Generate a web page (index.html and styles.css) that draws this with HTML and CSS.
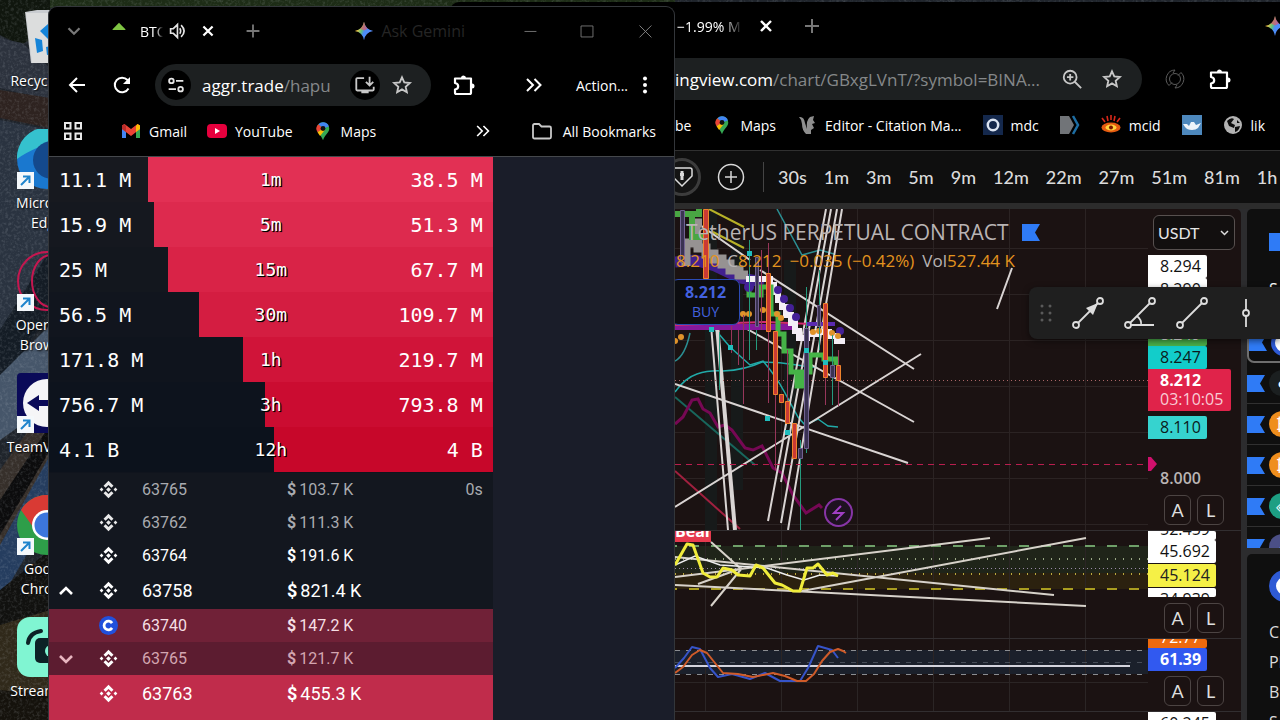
FILE: index.html
```html
<!DOCTYPE html>
<html lang="en">
<head>
    <meta charset="UTF-8">
    <meta name="viewport" content="width=device-width, initial-scale=1.0">
    <title>Desktop</title>
    <link rel="stylesheet" href="styles.css">
</head>
<body>
    <!-- Shared icons -->
    <svg class="sprite" aria-hidden="true">
        <symbol id="i-plus" viewBox="0 0 24 24"><path d="M12 5v14M5 12h14" stroke="currentColor" stroke-width="2" fill="none"/></symbol>
        <symbol id="i-x" viewBox="0 0 24 24"><path d="M7 7l10 10M17 7L7 17" stroke="currentColor" stroke-width="2.400" fill="none"/></symbol>
        <symbol id="i-star" viewBox="0 0 24 24"><path d="M12 3.600l2.500 5.600 6.100.600-4.600 4.100 1.300 6-5.300-3.100-5.300 3.100 1.300-6-4.600-4.100 6.100-.600z" stroke="currentColor" stroke-width="2" fill="none"/></symbol>
        <symbol id="i-ext" viewBox="0 0 24 24"><path d="M4 5.500H20V19.500q0 1.500-1.500 1.500H5.500Q4 21 4 19.500V16.500q3.200-.5 3.200-3.200T4 10z" transform="translate(-1 0)" stroke="currentColor" stroke-width="2.200" fill="none" stroke-linejoin="round"/><path d="M9 5a2.500 2.500 0 0 1 5 0zM20 10.500a2.500 2.500 0 0 1 0 5z" fill="currentColor"/></symbol>
        <symbol id="i-more" viewBox="0 0 24 24"><path d="M5 6l6 6-6 6M12.500 6l6 6-6 6" stroke="currentColor" stroke-width="2" fill="none"/></symbol>
        <symbol id="i-gem" viewBox="0 0 24 24"><path d="M12 2q1.500 8.500 10 10-8.500 1.500-10 10-1.500-8.500-10-10 8.500-1.500 10-10z" fill="url(#gem)"/><path d="M12 2q.9 5 4 7.500l-4 2-4-2Q11.100 7 12 2z" fill="#e0556b" opacity="0.700"/></symbol>
        <symbol id="i-maps" viewBox="0 0 24 24"><path d="M12 1.500a7.500 7.500 0 0 1 7.500 7.500c0 5-5 7-7.500 14-2.500-7-7.500-9-7.500-14A7.500 7.500 0 0 1 12 1.500z" fill="#35a853"/><path d="M12 1.500a7.500 7.500 0 0 1 7 5L12 9 6.500 4A7.500 7.500 0 0 1 12 1.500z" fill="#4285f4"/><path d="M6.300 4L12 9l-6.500 4.500A7.500 7.500 0 0 1 6.300 4z" fill="#ea4335"/><path d="M12 9l-6.500 4.500q1.200 2 3 4.500L14 11z" fill="#fbbc04"/><circle cx="12" cy="9" r="2.900" fill="#111"/></symbol>
        <symbol id="i-binance" viewBox="0 0 24 24"><path d="M12 1l6.300 6.300-2.600 2.600L12 6.200 8.300 9.900 5.700 7.300zM12 23l6.300-6.300-2.600-2.600L12 17.800l-3.700-3.700-2.600 2.600zM12 9l3 3-3 3-3-3zM3.200 9.600L5.600 12l-2.400 2.400L.8 12zM20.800 9.600l2.400 2.400-2.400 2.400-2.400-2.400z" fill="currentColor"/></symbol>
        <symbol id="i-flag" viewBox="0 0 18 17"><path d="M0 0h18l-5 8.500 5 8.500H0z" fill="#2f7bf6"/></symbol>
        <symbol id="i-short" viewBox="0 0 17 17"><path d="M0 0h17v17H0z" fill="#f4f8fb"/><path d="M4 13l8-8M6 4.500h6.500V11" stroke="#1e84cc" stroke-width="2" fill="none"/></symbol>
        <linearGradient id="gem" x1="0" y1="0.300" x2="1" y2="0.700">
            <stop offset="0.150" stop-color="#f6c644"/><stop offset="0.380" stop-color="#5fc27b"/><stop offset="0.520" stop-color="#4a8df8"/><stop offset="1" stop-color="#5c8dff"/>
        </linearGradient>
    </svg>

    <!-- Wallpaper -->
    <svg class="wallpaper" viewBox="0 0 1280 720" preserveAspectRatio="xMinYMin slice" aria-hidden="true">
        <filter id="grain"><feTurbulence type="fractalNoise" baseFrequency="0.350" numOctaves="3" seed="4"/><feColorMatrix values="0 0 0 0 .6  0 0 0 0 .65  0 0 0 0 .7  1.600 0 0 0 -.72"/></filter>
        <rect width="1280" height="720" fill="#1f242b"/>
        <path d="M0 0h675v8H0z" fill="#1d2c16"/>
        <path d="M0 0h50v30L20 45 0 35z" fill="#10160e"/>
        <path d="M0 38l22 5 28 25v32L0 88z" fill="#2c323d"/>
        <path d="M0 90l50 8v30L0 118z" fill="#2e2320"/>
        <path d="M0 120l50 10v130L0 330z" fill="#2a3340"/>
        <path d="M0 330l50-80v60L0 390z" fill="#141c25"/>
        <path d="M0 375l50-50v80L0 440z" fill="#46566a"/>
        <path d="M50 400v60L0 575V470z" fill="#362f2a"/>
        <path d="M50 425v25L0 535v-35z" fill="#0c0c0d"/>
        <path d="M0 545l50-90v60L0 600z" fill="#253d5f"/>
        <path d="M0 590l50-40v65L0 625z" fill="#11110f"/>
        <path d="M0 625l50-15v110H0z" fill="#30291a"/>
        <path d="M0 690l50 5v25H0z" fill="#15120c"/>
        <rect width="1280" height="720" filter="url(#grain)" opacity="0.250"/>
    </svg>

    <nav class="desktop-icons">
        <a href="#"><svg viewBox="0 0 60 60"><path d="M8 5l12-2h34l-4 53H14z" fill="#c9ccd0"/><path d="M9 6h46l-4 50H15z" fill="#dcdddd"/><path d="M23 24l8-7 6 6-6 9zM18 31l7 2 1 11-6 2zM29 40l10-2 3 8-12 2z" fill="#1684d8"/></svg><span>Recycle Bin</span></a>
        <a href="#"><svg viewBox="0 0 60 60"><circle cx="30" cy="30" r="30" fill="#1a78cf"/><path d="M0 30A30 30 0 0 1 60 27Q40 8 22 18 8 24 0 30z" fill="#35c1ce"/><circle cx="35" cy="31" r="19" fill="#14498c"/><use href="#i-short" y="43" width="17" height="17"/></svg><span>Microsoft Edge</span></a>
        <a href="#"><svg viewBox="0 0 60 60"><g fill="none" stroke="#c51750" stroke-width="2"><ellipse cx="30" cy="30" rx="29" ry="29"/><ellipse cx="34" cy="30" rx="19" ry="26"/></g><use href="#i-short" y="43" width="17" height="17"/></svg><span>Opera GX Browser</span></a>
        <a href="#"><svg viewBox="0 0 60 60"><rect width="60" height="60" rx="4" fill="#0a0a58"/><circle cx="30" cy="30" r="24" fill="#f5f5f7"/><path d="M10 30l12-8v5h16v-5l12 8-12 8v-5H22v5z" fill="#0a0a58"/><use href="#i-short" y="43" width="17" height="17"/></svg><span>TeamViewer</span></a>
        <a href="#"><svg viewBox="0 0 60 60"><circle cx="30" cy="30" r="30" fill="#2e9e49"/><path d="M4 15A30 30 0 0 1 56 15H30L16 32z" fill="#d93a34"/><circle cx="30" cy="30" r="15" fill="#fff"/><circle cx="30" cy="30" r="12.500" fill="#3c76dc"/><use href="#i-short" y="43" width="17" height="17"/></svg><span>Google Chrome</span></a>
        <a href="#"><svg viewBox="0 0 60 60"><rect width="60" height="60" rx="13" fill="#80f5d2"/><path d="M11 26q1-10 13-12" stroke="#0c2226" stroke-width="4" fill="none" stroke-linecap="round"/><rect x="18" y="21" width="32" height="25" rx="5" fill="#0c2226"/><circle cx="34" cy="34" r="6" fill="#80f5d2"/></svg><span>Streamlabs</span></a>
    </nav>

    <!-- TradingView window -->
    <section class="window window-tv">
        <div class="tv-tabs">
            <span class="tab-title fade-end">−1.99% M</span>
            <button aria-label="Close tab"><svg><use href="#i-x"/></svg></button>
            <button class="dim" aria-label="New tab"><svg><use href="#i-plus"/></svg></button>
            <svg class="tv-gem"><use href="#i-gem"/></svg>
        </div>
        <div class="tv-bar">
            <div class="tv-omni">
                <span class="url">ingview.com<i>/chart/GBxgLVnT/?symbol=BINA...</i></span>
                <button aria-label="Zoom"><svg viewBox="0 0 24 24"><g stroke="#c7c7c7" stroke-width="2" fill="none"><circle cx="10" cy="10" r="7"/><path d="M15 15l7 7M6.500 10h7M10 6.500v7"/></g></svg></button>
                <button class="soft" aria-label="Bookmark"><svg><use href="#i-star"/></svg></button>
            </div>
            <button aria-label="Sync"><svg viewBox="0 0 24 24"><g fill="none" stroke="#5b5b5b"><circle cx="12" cy="12" r="5.500"/><path d="M12 3a9 9 0 0 0-6 15.500l3-3M12 21a9 9 0 0 0 6-15.500l-3 3M12 3l-2 3M12 21l2-3"/></g></svg></button>
            <button aria-label="Extensions"><svg><use href="#i-ext"/></svg></button>
        </div>
        <div class="tv-marks">
            <a href="#">be</a>
            <a href="#"><svg><use href="#i-maps"/></svg>Maps</a>
            <a href="#"><svg viewBox="0 0 20 20"><path d="M2 2q5-1 6 6l2 6q-1-9 3-12l4-1-1 4 2 3-3 1 2 4-3 2v4h-5Q5 15 5 9 5 5 2 2z" fill="#8e8e8e"/></svg>Editor - Citation Ma...</a>
            <a href="#"><svg viewBox="0 0 20 20"><path d="M0 0h20v20H0z" fill="#14284c"/><circle cx="10" cy="10" r="5.200" fill="none" stroke="#dbe4f2" stroke-width="2.500"/></svg>mdc</a>
            <a href="#" aria-label="Bookmark"><svg viewBox="0 0 20 20"><path d="M0 1h9l5 9-5 9H0z" fill="#717478"/><path d="M13 1l5 9-5 9" fill="none" stroke="#1d6da3" stroke-width="2.500"/></svg></a>
            <a href="#"><svg viewBox="0 0 20 20"><ellipse cx="10" cy="12.500" rx="9.500" ry="5" fill="#e45b10"/><ellipse cx="10" cy="12.500" rx="5.500" ry="3" fill="#ffd23c"/><circle cx="10" cy="12.500" r="2" fill="#7a1600"/><path d="M1 3l3 4M6 1l1 5M10 0v5M14 1l-1 5M19 3l-3 4" stroke="#d8281a" stroke-width="1.600"/></svg>mcid</a>
            <a href="#" aria-label="Bookmark"><svg viewBox="0 0 20 20"><path d="M0 0h20v20H0z" fill="#4d88bd"/><path d="M1 9h4l2 2 2-4h3l2 3 5-2-3 5q-2 2-6 2-5 0-7-3z" fill="#eef4fa"/></svg></a>
            <a href="#"><svg viewBox="0 0 20 20"><circle cx="10" cy="10" r="9" fill="#b3b3b3"/><path d="M4 6q4-4 7-2l-3 4 4 2-1 3-5-2zM12 12l5-1q-1 5-5 6zM14 5l3 3-3 0z" fill="#0b0b0b"/></svg>lik</a>
        </div>

        <div class="tv-times">
            <svg class="tv-shield" viewBox="0 0 38 38"><circle cx="19" cy="19" r="17.500" fill="#141414" stroke="#3c3c3c" stroke-width="3"/><path d="M9 12q0-2 2-2h16q2 0 2 2v6L19 28 9 18z" fill="none" stroke="#dcdcdc" stroke-width="1.500"/><path d="M19 13v9M17 16.500h4" stroke="#dcdcdc" stroke-width="3"/></svg>
            <button aria-label="Compare"><svg viewBox="0 0 28 28"><g fill="none" stroke="#d8d8d8" stroke-width="1.500"><circle cx="14" cy="14" r="12.500"/><path d="M14 8v12M8 14h12"/></g></svg></button>
            <hr>
            <div class="tv-frames">
                <button>30s</button><button>1m</button><button>3m</button><button>5m</button><button>9m</button><button>12m</button><button>22m</button><button>27m</button><button>51m</button><button>81m</button><button>1h</button>
            </div>
        </div>

        <div class="tv-main">
            <div class="tv-charts">
                <!-- Price pane -->
                <div class="pane pane-price">
                    <div class="plot">
                        <svg viewBox="675 209 473 321" preserveAspectRatio="xMinYMin slice">
                            <path d="M705.500 209v321M781.500 209v321M857.500 209v321M933.500 209v321M1009.500 209v321M1085.500 209v321M675 248.500h473M675 294.500h473M675 340.500h473M675 386.500h473M675 432.500h473M675 478.500h473M675 524.500h473" stroke="#2b2323" fill="none"/>
                            <path d="M711 209v321M737 240v250M790 260v180" stroke="#171a1a" stroke-width="12"/>
                            <!-- averages -->
                            <g fill="none" stroke-width="1.500">
                                <path d="M675 392Q685 378 697 374T723 371Q745 370 762 362 780 362 797 365T817 367" stroke="#21aaa8"/>
                                <path d="M713 327l17 20 20 18 13-4q13 15 22 32l13 24 7 8 13-6 10 7 10 1" stroke="#21aaa8"/>
                                <path d="M675 361q10-5 15-28M777 209l25 46 18-5 14 4" stroke="#2b8e92"/>
                                <path d="M675 397l80 68" stroke="#18665c" stroke-width="2"/>
                                <path d="M675 471l65 58" stroke="#a1203f" stroke-width="2"/>
                                <path d="M709 209l35 18M713 232l31 16" stroke="#b7b127" stroke-width="2"/>
                            </g>
                            <path d="M675 424l8-7 9-17 6-1 5 10 7 4 8 14 7-2 7 5 13 18 8 2 9-4 11 22 9 5 11 22 13 18 13-8 3 3" fill="none" stroke="#760854" stroke-width="3"/>
                            <!-- drawn lines -->
                            <g stroke="#d9d4d3" stroke-width="2" fill="none">
                                <path d="M826 209l-58 312M831 209l-50 273M837 209l-56 314M842 209l-54 321M711 325l17 205M760 270l154 99M738 324l176 98M675 384l233 79M675 507l246-153M997 309l15-41M700 225l50 35"/>
                                <path d="M717 325l18 205" stroke-width="4"/>
                            </g>
                            <path d="M675 380.500h473" stroke="#a66" stroke-dasharray="1 3"/>
                            <path d="M675 464.500h473" stroke="#b81e4e" stroke-dasharray="6 5"/>
                            <!-- bands -->
                            <path d="M675 327h118" stroke="#85189c" stroke-width="6"/>
                            <path d="M675 325l90-3 70 3" stroke="#d32a70" stroke-width="2" fill="none"/>
                            <path d="M675 262l20-2 20 6 25 12 24 4" stroke="#42208f" stroke-width="11" fill="none"/>
                            <path d="M686 266V243h10V223h6" stroke="#969292" stroke-width="9" fill="none"/>
                            <path d="M698 240v8h8v6h8v5h8v5h8v6h9v5h9" stroke="#969292" stroke-width="9" fill="none"/>
                            <path d="M746 279h24v6h4v7h4v8h4v7h4v8h5v8h4v8h4v7h8v-4h10v-2h12v4h8v5h8" stroke="#f4eef6" stroke-width="6" fill="none"/>
                            <path d="M675 214h24v-5M692 215v22h12" stroke="#49a643" stroke-width="6" fill="none"/>
                            <path d="M749 287v8h12v-8h10v27h7v20h6v17h7v21h6v14h5v-14h8v-17h14v4h12v6" stroke="#45b347" stroke-width="5" fill="none"/>
                            <g fill="#442097"><circle cx="749" cy="287" r="5"/><circle cx="778" cy="290" r="4"/><circle cx="784" cy="299" r="4"/><circle cx="790" cy="308" r="4"/><circle cx="796" cy="317" r="4"/><circle cx="840" cy="331" r="4"/></g>
                            <path d="M806 324h29" stroke="#5b2ab0" stroke-width="4"/>
                            <g fill="#e0932a"><circle cx="675" cy="341" r="3"/><circle cx="681" cy="337" r="3"/><circle cx="743" cy="314" r="3"/><circle cx="749" cy="314" r="3"/><circle cx="763" cy="310" r="3"/><circle cx="777" cy="314" r="3"/><circle cx="781" cy="318" r="3"/><circle cx="813" cy="332" r="3"/><circle cx="819" cy="331" r="3"/><circle cx="832" cy="333" r="3"/><circle cx="838" cy="336" r="3"/></g>
                            <!-- wicks -->
                            <path d="M743.500 315v89M738.500 330v35M731.500 326v27M775.500 395v75M787.500 350v70M768.500 243v160M825.500 377v28M838.500 350v56M761.500 250v80" stroke="#98365a"/>
                            <path d="M719.500 332v58M749.500 240v120M756.500 330v20M806.500 287v166M800.500 440v90M819.500 270v80M832.500 335v70" stroke="#259b7e"/>
                            <!-- candles -->
                            <g fill="#c93a35" stroke="#ef832c">
                                <path d="M703.500 209.500h5v69h-5zM766.500 273.500h4v58h-4zM773.500 331.500h4v63h-4zM779.500 394.500h4v8h-4zM785.500 401.500h4v22h-4zM792.500 423.500h4v35h-4zM823.500 303.500h4v74h-4zM836.500 365.500h4v15h-4z"/>
                            </g>
                            <g fill="#3a3252" stroke="#716291">
                                <path d="M680.500 210.500h4v52h-4zM755.500 257.500h3v69h-3zM798.500 448.500h4v10h-4zM804.500 328.500h4v120h-4zM817.500 305.500h3v21h-3zM830.500 365.500h4v12h-4z"/>
                            </g>
                            <path d="M728 345h5v5h-5zM747 251h5v5h-5zM804 348h5v5h-5zM823 360h5v5h-5zM765 416h5v5h-5zM785 430h5v5h-5zM709 327h5v5h-5z" fill="#21bdbd"/>
                            <circle cx="838.500" cy="512.500" r="13.500" fill="#1e1220" stroke="#8735a6" stroke-width="2"/>
                            <path d="M841 506l-7 7h9l-7 7" stroke="#a03fc4" stroke-width="2" fill="none"/>
                        </svg>
                        <div class="legend">
                            <h1>TetherUS PERPETUAL CONTRACT <svg><use href="#i-flag"/></svg></h1>
                            <p><b>8.210</b><span>C<b>8.212</b></span><b>−0.035 (−0.42%)</b><span>Vol<b>527.44 K</b></span></p>
                        </div>
                        <button class="buy"><b>8.212</b>BUY</button>
                    </div>
                    <div class="axis">
                        <select aria-label="Currency"><option>USDT</option></select>
                        <div class="tags">
                            <span class="tag white">8.294</span>
                            <span class="tag white">8.290</span>
                            <span class="tag green">8.249</span>
                            <span class="tag cyan">8.247</span>
                            <span class="tag red"><b>8.212</b>03:10:05</span>
                            <span class="tag cyan apart">8.110</span>
                        </div>
                        <svg class="marker" viewBox="0 0 10 14"><path d="M0 0h3l6 7-6 7H0z" fill="#d0106c"/></svg>
                        <span class="tick">8.000</span>
                        <div class="scale"><button>A</button><button>L</button></div>
                    </div>
                </div>

                <!-- Oscillator panes -->
                <div class="pane pane-rsi">
                    <div class="plot">
                        <svg viewBox="675 531 473 107" preserveAspectRatio="xMinYMin slice">
                            <path d="M675 546h473v27H675z" fill="#1f2419"/>
                            <path d="M675 573h473v16H675z" fill="#2b210f"/>
                            <path d="M705.500 530v109M781.500 530v109M857.500 530v109M933.500 530v109M1009.500 530v109M1085.500 530v109" stroke="#2b2525"/>
                            <path d="M675 546h473" stroke="#6fa069" stroke-width="2" stroke-dasharray="10 12" stroke-dashoffset="8"/>
                            <path d="M675 559h473" stroke="#9aa886" stroke-width="2" stroke-dasharray="1 7"/>
                            <path d="M675 568.500h473" stroke="#9a8aa8" stroke-dasharray="1 3"/>
                            <path d="M675 574h473" stroke="#b9a93e" stroke-width="2" stroke-dasharray="1 7"/>
                            <path d="M675 589h473" stroke="#a99d20" stroke-width="2" stroke-dasharray="10 12" stroke-dashoffset="8"/>
                            <path d="M675 577l65-8 250-31M802 591l284-53M675 557l379 38M675 585l411 21M711 542l30 27M711 606l31-38M698 584l44-16" stroke="#d7d2ca" stroke-width="2" fill="none"/>
                            <path d="M675 565l20-9 25 9 47 3 20 7 17 5 16-5 18 1" stroke="#eee" stroke-width="1.500" fill="none"/>
                            <path d="M675 565l12-21 6 1 10 28 7 4h7l6-9 9 2 6 5 12 1 6-11 7 3 12 15 7 2 11 6h7l7-23h6l5-4 9 11 6-2 5 3" stroke="#f0ec3b" stroke-width="3" fill="none" stroke-linejoin="round"/>
                        </svg>
                        <span class="bear">Bear</span>
                    </div>
                    <div class="axis">
                        <div class="tags wide">
                            <span class="tag white cut-top">52.459</span>
                            <span class="tag white">45.692</span>
                            <span class="tag yellow">45.124</span>
                            <span class="tag white cut-bottom">34.939</span>
                        </div>
                        <div class="scale"><button>A</button><button>L</button></div>
                    </div>
                </div>
                <div class="pane pane-stoch">
                    <div class="plot">
                        <svg viewBox="675 639 473 72" preserveAspectRatio="xMinYMin slice">
                            <path d="M675 650h473v24H675z" fill="#1b202b"/>
                            <path d="M705.500 638v74M781.500 638v74M857.500 638v74M933.500 638v74M1009.500 638v74M1085.500 638v74M675 682.500h473" stroke="#2b2525"/>
                            <path d="M675 650.500h473M675 674.500h473" stroke="#8b8d91" stroke-dasharray="5 6"/>
                            <path d="M675 662.500h473" stroke="#474d58" stroke-dasharray="5 6"/>
                            <path d="M675 666h455" stroke="#d3d3dc" stroke-width="2"/>
                            <path d="M675 668l9-10 8-11 8 2 10 19 8 9 14-3 18 5 15-6 15 8h20l8-13 10-22 14 4 6 8" stroke="#3654c9" stroke-width="2" fill="none" stroke-linejoin="round"/>
                            <path d="M675 673l8-6 9-12 8-5 7 3 8 10 8 10 15 1 15 3 20-4 12 3 12 5h9l8-7 8-13 8-9 8-3 5 2 3 2" stroke="#cf5b29" stroke-width="2" fill="none" stroke-linejoin="round"/>
                        </svg>
                    </div>
                    <div class="axis">
                        <div class="tags">
                            <span class="tag orange cut-top">72.77</span>
                            <span class="tag blue">61.39</span>
                        </div>
                        <div class="scale"><button>A</button><button>L</button></div>
                    </div>
                </div>
                <div class="pane">
                    <div class="plot"></div>
                    <div class="axis"><div class="tags wide"><span class="tag white">60.245</span></div></div>
                </div>
            </div>

            <aside class="tv-side">
                <div class="watch">
                    <div class="watch-head"><svg viewBox="0 0 12 18"><path d="M0 0h12v18H0z" fill="#2f7bf6"/></svg><span>S</span></div>
                    <div class="row picked"><svg class="flag"><use href="#i-flag"/></svg><i class="coin link"></i></div>
                    <div class="row"><svg class="flag"><use href="#i-flag"/></svg><i class="coin dark">●</i></div>
                    <div class="row"><svg class="flag"><use href="#i-flag"/></svg><i class="coin btc">₿</i></div>
                    <div class="row"><svg class="flag"><use href="#i-flag"/></svg><i class="coin btc">₿</i></div>
                    <div class="row"><svg class="flag"><use href="#i-flag"/></svg><i class="coin usdt">◈</i></div>
                    <div class="row"><svg class="flag"><use href="#i-flag"/></svg><i class="coin eth">▲</i></div>
                </div>
                <div class="detail">
                    <i class="coin link"></i>
                    <span>C</span><span>Pl</span><span>Bl</span><span>S</span>
                </div>
            </aside>

            <!-- Drawing favourites -->
            <div class="fav">
                <svg class="grip" viewBox="0 0 12 18"><g fill="#5a5a5a"><circle cx="2" cy="2" r="1.500"/><circle cx="10" cy="2" r="1.500"/><circle cx="2" cy="9" r="1.500"/><circle cx="10" cy="9" r="1.500"/><circle cx="2" cy="16" r="1.500"/><circle cx="10" cy="16" r="1.500"/></g></svg>
                <button aria-label="Arrow"><svg viewBox="0 0 32 32"><g fill="none" stroke="#ddd" stroke-width="1.800"><circle cx="4" cy="28" r="3"/><circle cx="28" cy="4" r="3"/><path d="M6 26L26 6"/></g><path d="M26 6l-5 12-7-7z" fill="#ddd"/></svg></button>
                <button aria-label="Trend angle"><svg viewBox="0 0 32 32"><g fill="none" stroke="#ddd" stroke-width="1.800"><circle cx="4" cy="28" r="3"/><circle cx="28" cy="4" r="3"/><path d="M6 26L26 6M7 28h23M13 19q5 4 4 9"/></g></svg></button>
                <button aria-label="Trend line"><svg viewBox="0 0 32 32"><g fill="none" stroke="#ddd" stroke-width="1.800"><circle cx="4" cy="28" r="3"/><circle cx="28" cy="4" r="3"/><path d="M6 26L26 6"/></g></svg></button>
                <button aria-label="Vertical line"><svg viewBox="0 0 32 32"><g fill="none" stroke="#ddd" stroke-width="1.800"><circle cx="18" cy="16" r="3"/><path d="M18 2v11M18 19v11"/></g></svg></button>
            </div>
        </div>
    </section>

    <!-- Aggr window -->
    <section class="window window-aggr">
        <div class="ag-tabs">
            <button class="dim" aria-label="Search tabs"><svg viewBox="0 0 24 24"><path d="M6 9l6 6 6-6" stroke="#777" stroke-width="2.500" fill="none"/></svg></button>
            <svg viewBox="0 0 24 24"><path d="M12 3l7 7v1H5v-1z" fill="#7fc443"/></svg>
            <span class="tab-title fade-end">BTC</span>
            <button aria-label="Mute tab"><svg viewBox="0 0 24 24"><path d="M5 9.500v5h3l4.500 4.500V5L8 9.500zM15 9q2 3 0 6M16.500 5.500q6.500 6.500 0 13" stroke="#e4e4e4" stroke-width="1.800" fill="none"/></svg></button>
            <button aria-label="Close tab"><svg><use href="#i-x"/></svg></button>
            <button class="dim" aria-label="New tab"><svg><use href="#i-plus"/></svg></button>
            <button class="ask"><svg><use href="#i-gem"/></svg>Ask Gemini</button>
            <button aria-label="Minimise"><svg viewBox="0 0 24 24"><path d="M6 12.500h13" stroke="#777"/></svg></button>
            <button aria-label="Maximise"><svg viewBox="0 0 24 24"><path d="M5.500 6.500h13v12h-13z" stroke="#777" fill="none"/></svg></button>
            <button aria-label="Close"><svg viewBox="0 0 24 24"><path d="M6 6l13 13M19 6L6 19" stroke="#888" fill="none"/></svg></button>
        </div>
        <div class="ag-bar">
            <button aria-label="Back"><svg viewBox="0 0 24 24"><path d="M20 12H5M12 5l-7 7 7 7" stroke="#fff" stroke-width="2" fill="none"/></svg></button>
            <button aria-label="Reload"><svg viewBox="0 0 24 24"><path d="M18.500 15.500A7.300 7.300 0 1 1 17.500 7l1.500 1.500" stroke="#fff" stroke-width="2" fill="none"/><path d="M20 4v7h-7z" fill="#fff"/></svg></button>
            <div class="ag-omni">
                <button class="round" aria-label="Site settings"><svg viewBox="0 0 24 24"><g stroke="#e6e6e6" stroke-width="2" fill="none"><circle cx="7" cy="7.500" r="2.500"/><path d="M12 7.500h8"/><circle cx="17" cy="16.500" r="2.500"/><path d="M4 16.500h8"/></g></svg></button>
                <span class="url">aggr.trade<i>/hapu</i></span>
                <button class="round" aria-label="Install"><svg viewBox="0 0 24 24"><path d="M11 4.500H3.500q-1 0-1 1V17q0 1 1 1h17q1 0 1-1v-3M17 3v9M13 8.500l4 4 4-4" stroke="#c7c7c7" stroke-width="2" fill="none"/><path d="M8 18h8v3H8z" fill="#c7c7c7"/></svg></button>
                <button class="soft" aria-label="Bookmark"><svg><use href="#i-star"/></svg></button>
            </div>
            <button aria-label="Extensions"><svg><use href="#i-ext"/></svg></button>
            <button class="push" aria-label="More"><svg><use href="#i-more"/></svg></button>
            <button class="action">Action...<svg viewBox="0 0 8 24"><g fill="#fff"><circle cx="4" cy="5.500" r="2"/><circle cx="4" cy="12" r="2"/><circle cx="4" cy="18.500" r="2"/></g></svg></button>
        </div>
        <div class="ag-marks">
            <button aria-label="Apps"><svg viewBox="0 0 20 20"><path d="M2 2h5.500v5.500H2zM12.500 2H18v5.500h-5.500zM2 12.500h5.500V18H2zM12.500 12.500H18V18h-5.500z" stroke="#e8e8e8" stroke-width="2" fill="none"/></svg></button>
            <a href="#"><svg viewBox="0 0 20 20"><path d="M1 4v13h4V9z" fill="#4285f4"/><path d="M19 4v13h-4V9z" fill="#34a853"/><path d="M1 4.500L3.500 3 10 8l6.500-5L19 4.500V8l-9 7-9-7z" fill="#ea4335"/><path d="M15 5l1.500-2L19 4.500V8l-4 3z" fill="#fbbc04"/><path d="M1 4.500L3.500 3 5 5v6L1 8z" fill="#b92d2b"/></svg>Gmail</a>
            <a href="#"><svg viewBox="0 0 20 20"><rect y="3" width="20" height="14" rx="4" fill="#e6003d"/><path d="M8 7l5 3-5 3z" fill="#fff"/></svg>YouTube</a>
            <a href="#"><svg><use href="#i-maps"/></svg>Maps</a>
            <button class="push" aria-label="More bookmarks"><svg><use href="#i-more"/></svg></button>
            <a href="#"><svg viewBox="1 0 20 20"><path d="M2 4.500Q2 3 3.500 3H8l2.500 2.500h8q1.500 0 1.500 1.500v9q0 1.500-1.500 1.500h-15Q2 17.500 2 16z" stroke="#c9c9c9" stroke-width="1.800" fill="none"/></svg>All Bookmarks</a>
        </div>

        <main class="ag-page">
            <div class="ag-feed">
                <div class="stats">
                    <div class="stat" style="--sell: 344"><span>11.1 M</span><b>1m</b><span>38.5 M</span></div>
                    <div class="stat" style="--sell: 338"><span>15.9 M</span><b>5m</b><span>51.3 M</span></div>
                    <div class="stat" style="--sell: 324"><span>25 M</span><b>15m</b><span>67.7 M</span></div>
                    <div class="stat" style="--sell: 293"><span>56.5 M</span><b>30m</b><span>109.7 M</span></div>
                    <div class="stat" style="--sell: 249"><span>171.8 M</span><b>1h</b><span>219.7 M</span></div>
                    <div class="stat" style="--sell: 227"><span>756.7 M</span><b>3h</b><span>793.8 M</span></div>
                    <div class="stat" style="--sell: 219"><span>4.1 B</span><b>12h</b><span>4 B</span></div>
                </div>
                <table class="trades">
                    <colgroup><col class="c-dir"><col class="c-ex"><col class="c-price"><col><col class="c-time"></colgroup>
                    <tbody>
                        <tr class="faint"><td></td><td><svg><use href="#i-binance"/></svg></td><td>63765</td><td><b>$</b>103.7 K</td><td>0s</td></tr>
                        <tr class="faint"><td></td><td><svg><use href="#i-binance"/></svg></td><td>63762</td><td><b>$</b>111.3 K</td><td></td></tr>
                        <tr><td></td><td><svg><use href="#i-binance"/></svg></td><td>63764</td><td><b>$</b>191.6 K</td><td></td></tr>
                        <tr class="big"><td><svg viewBox="0 0 24 24"><path d="M4 16l8-8 8 8" stroke="#fff" stroke-width="3.500" fill="none"/></svg></td><td><svg><use href="#i-binance"/></svg></td><td>63758</td><td><b>$</b>821.4 K</td><td></td></tr>
                        <tr class="sell"><td></td><td><svg viewBox="0 0 24 24"><circle cx="12" cy="12" r="12" fill="#2150dc"/><path d="M16.500 9A5.500 5.500 0 1 0 16.500 15" stroke="#fff" stroke-width="3.500" fill="none"/></svg></td><td>63740</td><td><b>$</b>147.2 K</td><td></td></tr>
                        <tr class="sell dimmer"><td><svg viewBox="0 0 24 24"><path d="M4 8l8 8 8-8" stroke="#e8b6c0" stroke-width="3.500" fill="none"/></svg></td><td><svg><use href="#i-binance"/></svg></td><td>63765</td><td><b>$</b>121.7 K</td><td></td></tr>
                        <tr class="big hot"><td></td><td><svg><use href="#i-binance"/></svg></td><td>63763</td><td><b>$</b>455.3 K</td><td></td></tr>
                        <tr class="hot"><td colspan="5"></td></tr>
                    </tbody>
                </table>
            </div>
        </main>
    </section>
</body>
</html>
```

FILE: styles.css
```css
* {
    box-sizing: border-box;
}
body {
    margin: 0;
    height: 100vh;
    overflow: hidden;
    position: relative;
    background: #1f242b;
    color: #fff;
    font-family: "Open Sans", "Noto Sans", sans-serif;
    font-size: 14px;
}
button {
    display: flex;
    align-items: center;
    justify-content: center;
    padding: 0;
    border: none;
    background: none;
    color: inherit;
    font: inherit;
    cursor: pointer;
}
a {
    color: inherit;
    text-decoration: none;
}
svg {
    display: block;
    flex: none;
    width: 24px;
    height: 24px;
}
.sprite {
    position: absolute;
    width: 0;
    height: 0;
}
.wallpaper {
    position: absolute;
    inset: 0;
    width: 100%;
    height: 100%;
}

/* Desktop icons */
.desktop-icons {
    position: absolute;
    top: 7px;
    left: 3px;
    width: 88px;
}
.desktop-icons a {
    display: flex;
    flex-direction: column;
    align-items: center;
    gap: 4px;
    height: 122px;
    line-height: 20px;
    text-align: center;
    text-shadow: 1px 1px 2px #000;
}
.desktop-icons svg {
    width: 60px;
    height: 60px;
}

/* Browser windows */
.window {
    position: absolute;
    bottom: 0;
    display: flex;
    flex-direction: column;
    overflow: hidden;
    background: #000;
}
.dim {
    color: #777;
}
.soft {
    color: #c7c7c7;
}
.url {
    flex: 1;
    overflow: hidden;
    font-size: 17px;
    white-space: nowrap;
}
.url i {
    color: #85888a;
    font-style: normal;
}
.tab-title {
    overflow: hidden;
    white-space: nowrap;
}
.fade-end {
    -webkit-mask-image: linear-gradient(90deg, #000 70%, transparent);
    mask-image: linear-gradient(90deg, #000 70%, transparent);
}

/* Aggr window */
.window-aggr {
    top: 6px;
    left: 48px;
    width: 627px;
    border: 1px solid #33363a;
    border-bottom: none;
    border-radius: 9px 9px 0 0;
}
.ag-tabs {
    flex: none;
    display: grid;
    grid-template-columns: 49px 42px 23px 28px 34px 56px 1fr 56px 58px 58px;
    align-items: center;
    height: 48px;
    text-align: left;
}
.ag-tabs > svg {
    justify-self: center;
}
.ag-tabs svg {
    width: 22px;
    height: 22px;
}
.ask {
    gap: 6px;
    justify-content: flex-end;
    padding-right: 37px;
    color: #252525;
    font-size: 16px;
}
.ag-bar {
    flex: none;
    display: flex;
    align-items: center;
    gap: 21px;
    height: 60px;
    padding: 0 25px 0 16px;
}
.ag-omni {
    display: flex;
    align-items: center;
    gap: 11px;
    width: 276px;
    height: 42px;
    padding: 0 18px 0 6px;
    border-radius: 21px;
    background: #1d2021;
}
.round {
    flex: none;
    width: 30px;
    height: 30px;
    border-radius: 50%;
    background: #000;
}
.round svg,
.ag-omni .soft svg {
    width: 22px;
    height: 22px;
}
.push {
    margin-left: auto;
}
.ag-bar .push {
    margin-right: 9px;
}
.action {
    gap: 13px;
}
.action svg {
    width: 8px;
}
.ag-marks {
    flex: none;
    display: flex;
    align-items: center;
    gap: 20px;
    height: 41px;
    padding: 0 18px 9px 14px;
}
.ag-marks svg {
    width: 20px;
    height: 20px;
}
.ag-marks a,
.tv-marks a {
    display: flex;
    align-items: center;
    gap: 8px;
    white-space: nowrap;
}
.ag-marks button:first-child {
    margin-right: 18px;
}
.ag-marks .push + a {
    gap: 11px;
    margin-left: 19px;
}
.ag-page {
    flex: 1;
    min-height: 0;
    overflow: hidden;
    border-top: 1px solid #45484c;
    background: #1a1d29;
}
.ag-feed {
    width: 71%;
    background: #10141d;
}
.stats {
    font-family: "DejaVu Sans Mono", monospace;
    font-size: 20px;
}
.stat {
    display: grid;
    grid-template-columns: 1fr 60px 1fr;
    align-items: center;
    height: 45px;
    padding: 0 10px;
    --edge: calc(100% - var(--sell) * 100% / 443);
    background: linear-gradient(90deg, var(--calm) var(--edge), var(--hot) var(--edge));
}
.stat b {
    font-size: 18px;
    font-weight: normal;
    text-align: center;
    text-shadow: 1px 1px 1px #000, 1px 1px 0 #000;
}
.stat span:last-child {
    text-align: right;
}
.stat:nth-child(1) { --calm: #17191f; --hot: #e23054; }
.stat:nth-child(2) { --calm: #15181f; --hot: #dd2a4e; }
.stat:nth-child(3) { --calm: #13171e; --hot: #d92347; }
.stat:nth-child(4) { --calm: #11151e; --hot: #d41d41; }
.stat:nth-child(5) { --calm: #0f141d; --hot: #d01439; }
.stat:nth-child(6) { --calm: #0d131d; --hot: #cb0c31; }
.stat:nth-child(7) { --calm: #0c121c; --hot: #c7072a; }

.trades {
    width: 100%;
    margin-top: 1px;
    border-collapse: collapse;
    table-layout: fixed;
    font-family: Roboto, sans-serif;
    font-size: 16px;
}
.c-dir { width: 50px; }
.c-ex { width: 43px; }
.c-price { width: 145px; }
.c-time { width: 52px; }
.trades tr {
    height: 33px;
    background: #13171f;
}
.trades td {
    padding: 0;
}
.trades td:first-child svg {
    width: 18px;
    height: 18px;
    margin-left: 8px;
}
.trades td:nth-child(2) svg {
    width: 19px;
    height: 19px;
}
.trades td b {
    margin-right: 3px;
}
.trades td:nth-child(5) {
    padding-right: 10px;
    text-align: right;
}
.trades .faint {
    color: #a9abb0;
}
.trades .faint svg {
    color: #e9e9e9;
}
.trades .big {
    height: 37px;
    font-size: 18px;
}
.trades .sell {
    background: #702137;
    color: #f5dfe4;
}
.trades .dimmer {
    background: #5c1c30;
    color: #d3a5b0;
}
.trades .dimmer svg {
    color: #fff;
}
.trades .hot {
    background: #c02c4b;
}

/* TradingView window */
.window-tv {
    top: 2px;
    left: 450px;
    right: 0;
    padding-left: 225px;
    border-radius: 9px 0 0 0;
}
.tv-tabs {
    flex: none;
    display: flex;
    align-items: center;
    height: 48px;
}
.tv-tabs .tab-title {
    width: 66px;
    margin: 0 11px 0 2px;
}
.tv-tabs .dim {
    margin-left: 22px;
}
.tv-gem {
    margin: 0 -7px 0 auto;
}
.tv-bar {
    flex: none;
    display: flex;
    align-items: center;
    gap: 21px;
    height: 58px;
}
.tv-omni {
    display: flex;
    align-items: center;
    gap: 16px;
    width: 467px;
    height: 42px;
    padding-right: 18px;
    border-radius: 0 21px 21px 0;
    background: #1d2021;
}
.tv-marks {
    flex: none;
    display: flex;
    align-items: center;
    gap: 21px;
    height: 43px;
    padding-bottom: 8px;
    border-bottom: 1px solid #303030;
}
.tv-omni svg {
    width: 22px;
    height: 22px;
}
.tv-marks svg {
    width: 20px;
    height: 20px;
}
.tv-bar > button,
.tv-omni button {
    width: 24px;
}
.tv-times {
    flex: none;
    display: flex;
    align-items: center;
    height: 52px;
    background: #0f0f0f;
    color: #dbdbdb;
    font-family: Lato, sans-serif;
    font-size: 18px;
}
.tv-shield {
    width: 38px;
    height: 38px;
    margin-left: -12px;
}
.tv-times > button {
    margin: 0 18px 0 16px;
}
.tv-times > button svg {
    width: 28px;
    height: 28px;
}
.tv-times hr {
    height: 30px;
    margin: 0;
    border: none;
    border-left: 1px solid #444;
}
.tv-frames {
    display: flex;
    gap: 17px;
    margin-left: 14px;
    font-weight: 500;
}
.tv-main {
    position: relative;
    flex: 1;
    display: flex;
    gap: 6px;
    min-height: 0;
    border-top: 6px solid #2c2c2c;
    background: #2c2c2e;
    font-family: "Open Sans", sans-serif;
    font-size: 16px;
}
.tv-charts {
    flex: 1;
    min-width: 0;
    overflow: hidden;
    border-radius: 0 5px 0 0;
    background: #1b1212;
}
.pane {
    display: flex;
    border-bottom: 1px solid #322e30;
}
.pane-price { height: 322px; }
.pane-rsi { height: 108px; }
.pane-stoch { height: 73px; }
.plot {
    position: relative;
    flex: 1;
    min-width: 0;
    overflow: hidden;
}
.plot > svg {
    width: 100%;
    height: 100%;
}
.legend {
    position: absolute;
    top: 8px;
    left: 1px;
    color: #b9b4b4;
    white-space: nowrap;
}
.legend h1 {
    display: flex;
    align-items: center;
    gap: 13px;
    margin: 0 0 0 10px;
    font-size: 21px;
    font-weight: normal;
    line-height: 30px;
}
.legend h1 svg {
    width: 18px;
    height: 17px;
}
.legend p {
    display: flex;
    gap: 8px;
    margin: 0;
    font-size: 17px;
    line-height: 28px;
}
.legend b {
    color: #e3941f;
    font-weight: 500;
}
.buy {
    position: absolute;
    top: 70px;
    left: -4px;
    flex-direction: column;
    width: 69px;
    height: 46px;
    border: 1px solid #2c4bb5;
    border-radius: 7px;
    background: #0c0d11;
    color: #4361df;
    font-size: 14px;
    line-height: 20px;
}
.buy b {
    font-size: 16px;
}
.bear {
    position: absolute;
    top: 0;
    left: 0;
    width: 36px;
    height: 11px;
    overflow: hidden;
    background: #e73a4e;
    font-size: 16px;
    font-weight: bold;
    line-height: 1px;
}
.axis {
    display: flex;
    flex-direction: column;
    width: 93px;
}
.axis select {
    flex: none;
    width: 82px;
    height: 35px;
    margin: 6px 0 5px 5px;
    padding: 0 4px;
    border: 1px solid #57504f;
    border-radius: 6px;
    appearance: none;
    background: #120f0f url("data:image/svg+xml,%3Csvg xmlns='http://www.w3.org/2000/svg' width='9' height='6'%3E%3Cpath d='M1 1l3.500 3.500L8 1' fill='none' stroke='%23ddd' stroke-width='1.500'/%3E%3C/svg%3E") no-repeat right 5px center;
    color: #e6e6e6;
    font-family: Lato, sans-serif;
    font-size: 16px;
}
.tags {
    display: flex;
    flex-direction: column;
    align-items: flex-start;
}
.tag {
    display: flex;
    flex-direction: column;
    flex: none;
    width: 59px;
    height: 23px;
    padding-left: 12px;
    overflow: hidden;
    border-radius: 0 2px 2px 0;
    font-weight: 500;
    line-height: 22px;
}
.wide .tag {
    width: 68px;
}
.white {
    background: #fff;
    color: #111;
}
.green {
    margin-top: 22px;
    background: #4bb04a;
}
.cyan {
    background: #12cdca;
    color: #0b1b1b;
}
.apart {
    margin-top: 5px;
    background: #36d3cf;
}
.tag.red {
    width: 83px;
    height: 42px;
    padding-top: 2px;
    background: #e0234a;
    color: #f8ccd5;
    line-height: 19px;
}
.red b {
    color: #fff;
}
.yellow {
    margin: 1px 0;
    background: #f5f046;
    color: #222;
}
.orange {
    background: #ee6a0e;
}
.tag.blue {
    background: #3159f0;
    font-weight: bold;
}
.tag.cut-top {
    justify-content: flex-end;
    height: 9px;
}
.tag.cut-bottom {
    height: 9px;
}
.marker {
    width: 10px;
    height: 14px;
    margin-top: 18px;
}
.tick {
    padding-left: 12px;
    color: #b9b4b4;
    font-weight: 600;
    line-height: 14px;
}
.scale {
    display: flex;
    gap: 6px;
    margin: auto 0 5px 16px;
}
.scale button {
    width: 27px;
    height: 30px;
    border: 1px solid #4c4443;
    border-radius: 6px;
    color: #dedede;
    font-family: Lato, sans-serif;
    font-size: 18px;
}

/* Watchlist strip */
.tv-side {
    display: flex;
    flex-direction: column;
    gap: 6px;
    width: 33px;
    overflow: hidden;
}
.watch {
    flex: none;
    height: 339px;
    overflow: hidden;
    border-radius: 5px 0 0 0;
    background: #0f0f0f;
}
.watch-head {
    height: 113px;
    padding: 24px 0 0 22px;
}
.watch-head svg {
    width: 12px;
    height: 18px;
    margin-bottom: 27px;
}
.row {
    display: flex;
    align-items: center;
    gap: 4px;
    height: 41px;
    border-bottom: 1px solid #303030;
}
.picked {
    border: 2px solid #6e6e6e;
    border-right: none;
    border-radius: 7px 0 0 7px;
}
.flag {
    width: 18px;
    height: 17px;
}
.coin {
    display: flex;
    flex: none;
    align-items: center;
    justify-content: center;
    width: 26px;
    height: 26px;
    border-radius: 50%;
    font-style: normal;
}
.link {
    border: 4px solid #2e5ad5;
    background: #fff;
}
.dark { background: #1b1f20; }
.btc { background: #ef8e1d; }
.usdt { background: #1d9f83; }
.eth { background: #4b4f86; }
.detail {
    flex: 1;
    padding: 16px 0 0 22px;
    border-radius: 5px 0 0 0;
    background: #0f0f0f;
    color: #dbdbdb;
}
.detail .coin {
    width: 32px;
    height: 32px;
    margin-bottom: 15px;
    border-width: 7px;
}
.detail span {
    display: block;
    line-height: 30px;
}

/* Floating toolbar over the chart */
.fav {
    position: absolute;
    top: 78px;
    right: 0;
    display: flex;
    align-items: center;
    gap: 20px;
    width: 251px;
    height: 52px;
    padding-left: 11px;
    overflow: hidden;
    border-radius: 8px 0 0 8px;
    background: #1f1f1f;
    box-shadow: 0 2px 6px rgba(0, 0, 0, 0.5);
}
.grip {
    width: 12px;
    height: 18px;
}
.fav button svg {
    width: 32px;
    height: 32px;
}
```
